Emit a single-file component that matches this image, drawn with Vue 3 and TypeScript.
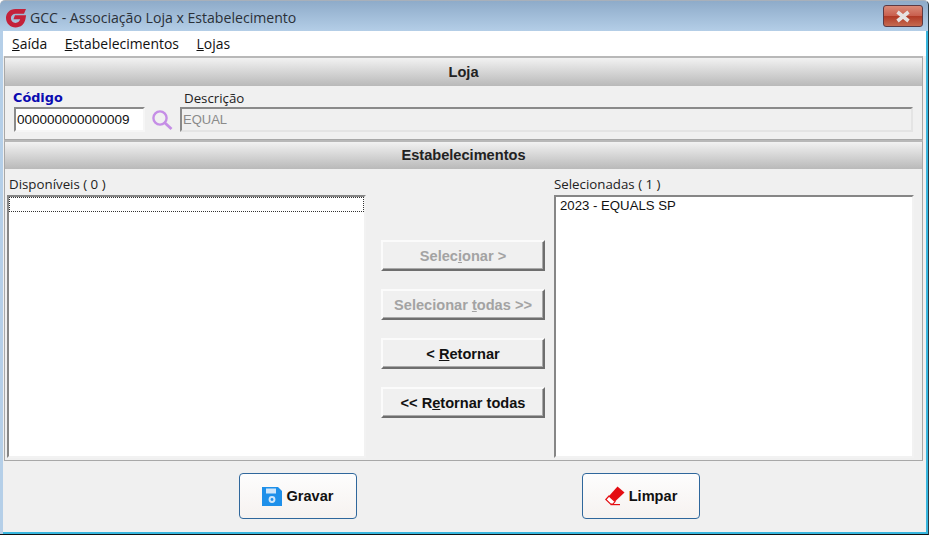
<script setup lang="ts">
const menus = [
  { key: 'S', rest: 'aída' },
  { key: 'E', rest: 'stabelecimentos' },
  { key: 'L', rest: 'ojas' },
]
const moves = [
  { before: 'Selec', key: 'i', after: 'onar >', off: true },
  { before: 'Selecionar ', key: 't', after: 'odas >>', off: true },
  { before: '< ', key: 'R', after: 'etornar', off: false },
  { before: '<< R', key: 'e', after: 'tornar todas', off: false },
]
</script>

<template>
  <div class="win">
    <header class="title">
      <svg class="logo" width="22" height="20" viewBox="1 2 20 19">
        <path d="M20.5 3 H10.5 C5 3 1.5 7 1.5 11.5 C1.5 16.8 5.8 20.5 10.5 20.5 C15.6 20.5 19 17.5 20 12.5 L20.6 9 H10 L8.6 12.8 H15 C14.2 15 12.6 16.2 10.6 16.2 C8 16.2 6.2 14.2 6.2 11.6 C6.2 9 8.2 7.4 10.6 7.4 H18.6 Z" fill="#c4213a"/>
      </svg>
      <span class="title-text">GCC - Associação Loja x Estabelecimento</span>
      <span class="close"><svg width="18" height="13" viewBox="0 0 18 13"><path d="M3.5 2 L14.5 11 M14.5 2 L3.5 11" stroke="#e6e2e2" stroke-width="3.6" fill="none"/></svg></span>
    </header>
    <div class="client">
      <nav class="menu">
        <span v-for="m in menus" :key="m.key"><u>{{ m.key }}</u>{{ m.rest }}</span>
      </nav>
      <section class="frame">
        <h2 class="band">Loja</h2>
        <div class="fields">
          <div class="code">
            <label class="code-label">Código</label>
            <div class="input code-input">000000000000009</div>
          </div>
          <svg class="lens" width="24" height="24" viewBox="0 0 24 24">
            <circle cx="10" cy="10" r="6.6" fill="none" stroke="#c58ee6" stroke-width="2.4"/>
            <path d="M15 15 L21.5 21" stroke="#c58ee6" stroke-width="2.8"/>
          </svg>
          <div class="desc">
            <label class="desc-label">Descrição</label>
            <div class="input desc-input">EQUAL</div>
          </div>
        </div>
      </section>
      <section class="frame main">
        <h2 class="band band2">Estabelecimentos</h2>
        <div class="lists">
          <div class="col">
            <label class="left-label">Disponíveis ( 0 )</label>
            <div class="list"><div class="focus"></div></div>
          </div>
          <div class="moves">
            <button v-for="b in moves" :key="b.after" class="move" :class="{ off: b.off }">{{ b.before }}<u>{{ b.key }}</u>{{ b.after }}</button>
          </div>
          <div class="col">
            <label>Selecionadas ( 1 )</label>
            <div class="list"><div class="item">2023 - EQUALS SP</div></div>
          </div>
        </div>
      </section>
      <footer class="foot">
        <button class="act">
          <svg width="20" height="20" viewBox="0 0 20 20">
            <path d="M0 1 H16 L20 5 V20 H0 Z" fill="#1e90ea"/>
            <rect x="4" y="2.5" width="10" height="5" fill="#cfe6fa"/>
            <circle cx="10" cy="13.5" r="3.4" fill="#cfe6fa"/>
            <circle cx="10" cy="13.5" r="1.4" fill="#1e90ea"/>
          </svg>
          Gravar
        </button>
        <button class="act">
          <svg width="20" height="20" viewBox="0 0 20 20">
            <path d="M12.5 0.5 L19.5 6.5 L10 15.5 L4 10 Z" fill="#e40d12"/>
            <path d="M4 10 L0.8 13.5 L5.5 18 H8 L10 15.5 Z" fill="#fff" stroke="#e40d12" stroke-width="1.2"/>
            <path d="M5.5 18.6 H15" stroke="#e40d12" stroke-width="1.2"/>
          </svg>
          Limpar
        </button>
      </footer>
    </div>
  </div>
</template>

<style scoped>
.win {
  width: 929px;
  height: 535px;
  box-sizing: border-box;
  display: flex;
  flex-direction: column;
  background: linear-gradient(#8eabc9, #b5cfe8 31px);
  border-top: 1px solid #a8b0ba;
  border-right: 1px solid #2a3a44;
  border-bottom: 1px solid #111;
  border-radius: 5px 5px 0 0;
  font-family: "Open Sans", "Noto Sans", sans-serif;
  color: #111;
  overflow: hidden;
}
.title {
  height: 30px;
  flex: none;
  display: flex;
  align-items: center;
  padding: 0 4px 0 5px;
}
.logo { flex: none; margin-top: 3px; }
.title-text {
  margin-left: 3px;
  font-size: 14.1px;
  color: #2a3038;
  flex: 1;
  margin-top: 2px;
}
.close {
  width: 40px;
  height: 22px;
  margin-right: 1px;
  box-sizing: border-box;
  border: 1px solid #5c3a44;
  border-radius: 3px;
  background: linear-gradient(#d98a78, #c9604f 48%, #b13a26 52%, #c56a50);
  display: flex;
  align-items: center;
  justify-content: center;
}
.client {
  flex: 1;
  margin-left: 3px;
  min-height: 0;
  display: flex;
  flex-direction: column;
  background: #f0f0f0;
  border-right: 2px solid #38b6de;
  border-bottom: 2px solid #38b6de;
}
.menu {
  height: 25px;
  flex: none;
  background: #fff;
  display: flex;
  align-items: center;
  gap: 17.5px;
  padding-left: 9px;
  font-size: 13.95px;
}
.frame {
  border: 1px solid #a8a8a8;
  border-top: 2px solid #b8b8b8;
  margin: 0 3px 0 1px;
}
.band {
  margin: 0;
  height: 28px;
  background: linear-gradient(#f2f2f2, #b9b9b9);
  display: flex;
  align-items: center;
  justify-content: center;
  font: bold 14.6px "Liberation Sans", sans-serif;
  color: #222;
}
.band2 { height: 27px; padding-bottom: 1px; box-sizing: border-box; }
.fields {
  height: 53px;
  display: flex;
  padding: 4px 0 0 9px;
  box-sizing: border-box;
}
.code { width: 131px; flex: none; }
.code-label {
  display: block;
  font: bold 12.8px/16px "DejaVu Sans", "Liberation Sans", sans-serif;
  color: #0a0ab0;
  margin-left: -1px;
}
.input {
  height: 25px;
  box-sizing: border-box;
  border: 2px solid;
  border-color: #8a8a8a #f6f6f6 #f6f6f6 #8a8a8a;
  display: flex;
  align-items: center;
  padding: 0 0 1px 1px;
  font: 13.5px "Liberation Sans", sans-serif;
}
.code-input { background: #fff; margin-top: 1px; }
.lens { margin: 18px 6px 0 5px; flex: none; }
.desc { width: 733px; flex: none; }
.desc-label {
  display: block;
  font-size: 13.3px;
  line-height: 16px;
  margin-left: 4px;
  color: #222;
}
.desc-input {
  margin-top: 1px;
  color: #8a8a8a;
  border-color: #8a8a8a #e4e4e4 #e4e4e4 #8a8a8a;
  background: #f0f0f0;
  font-size: 13px;
}
.lists {
  height: 291px;
  display: grid;
  grid-template-columns: 359px 1fr 360px;
  padding: 0 8px 0 2px;
}
.col {
  display: flex;
  flex-direction: column;
  min-width: 0;
  font-size: 13.3px;
}
.col label {
  height: 26px;
  display: flex;
  align-items: flex-end;
  padding-bottom: 2px;
  box-sizing: border-box;
  color: #222;
}
.col .left-label { padding-left: 2px; }
.list {
  flex: 1;
  box-sizing: border-box;
  background: #fff;
  border: 2px solid;
  border-color: #868686 #f2f2f2 #f2f2f2 #868686;
  margin-bottom: 2px;
}
.focus {
  height: 15px;
  box-sizing: border-box;
  border: 1px dotted #333;
}
.item {
  font: 13.2px/17px "Liberation Sans", sans-serif;
  padding-left: 4px;
}
.moves {
  display: flex;
  flex-direction: column;
  gap: 18px;
  padding: 71px 0 0 15px;
}
.move {
  width: 164px;
  height: 31px;
  flex: none;
  padding: 0;
  background: #f0f0f0;
  border: 2px solid;
  border-color: #fbfbfb #6e6e6e #6e6e6e #fbfbfb;
  box-shadow: inset -1px -1px 0 #a9a9a9;
  font: bold 14.6px "Liberation Sans", sans-serif;
  color: #111;
}
.move.off { color: #a3a3a3; }
.foot {
  flex: 1;
  display: flex;
  padding: 12px 0 0 236px;
  gap: 225px;
}
.act {
  width: 118px;
  height: 46px;
  display: flex;
  align-items: center;
  justify-content: center;
  gap: 4px;
  padding: 0;
  background: linear-gradient(#fdfdfd, #f6f2f0);
  border: 1.5px solid #2f679c;
  border-radius: 4px;
  font: bold 14.6px "Liberation Sans", sans-serif;
  color: #111;
}
</style>
<style>
html, body { background: #fff; }
</style>
